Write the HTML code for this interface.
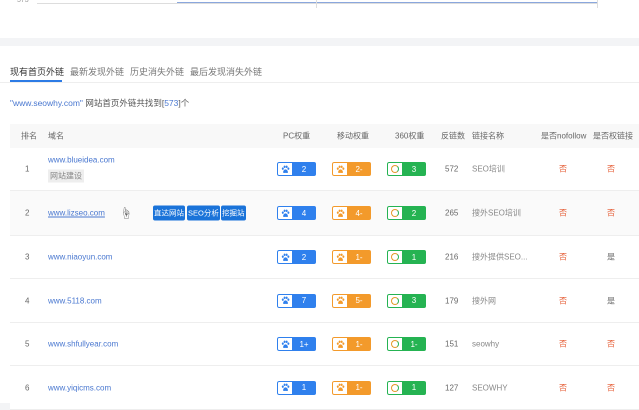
<!DOCTYPE html><html><head><meta charset="utf-8"><style>
body{margin:0;width:639px;height:403px;overflow:hidden;background:#f3f4f6;font-family:"Liberation Sans","Noto Sans CJK SC",sans-serif;position:relative;font-size:8px;color:#666}
.a{position:absolute}
.card{position:absolute;background:#fff;left:0;right:0}
.b{position:absolute;height:14px;width:39px;border-radius:2px;overflow:hidden;display:flex}
.b .l{width:15px;background:#fff;box-sizing:border-box;border-radius:2px 0 0 2px;display:flex;align-items:center;justify-content:center;font-size:8px}
.b .r{flex:1;color:#fff;display:flex;align-items:center;justify-content:center;font-size:8px}
.row{position:absolute;left:10px;right:0;border-bottom:1px solid #eee}
.c{position:absolute;top:50%;transform:translateY(-50%);white-space:nowrap}
.lnk{color:#4a78d0}
.red{color:#e4572e}
</style></head><body>
<div class="card" style="top:0;height:38px">
<div class="a" style="left:17px;top:-3px;font-size:7px;color:#999">573</div>
<div class="a" style="left:37px;top:3px;width:560px;height:1px;background:#ddd"></div>
<div class="a" style="left:177px;top:2px;width:420px;height:1px;background:#8aa7dd"></div>
<div class="a" style="left:316px;top:0;width:1px;height:8px;background:#ddd"></div>
<div class="a" style="left:597px;top:0;width:1px;height:8px;background:#ddd"></div>
</div>
<div class="card" style="top:46px;height:357px">
<div class="a" style="left:10px;top:19px;font-size:9px;color:#333">现有首页外链</div>
<div class="a" style="left:70px;top:19px;font-size:9px;color:#777">最新发现外链</div>
<div class="a" style="left:130px;top:19px;font-size:9px;color:#777">历史消失外链</div>
<div class="a" style="left:190px;top:19px;font-size:9px;color:#777">最后发现消失外链</div>
<div class="a" style="left:10px;top:34px;width:52px;height:2px;background:#2d7be5"></div>
<div class="a" style="left:0;right:0;top:36px;height:1px;background:#eee"></div>
<div class="a" style="left:10px;top:51px;font-size:8.5px;color:#555"><span class="lnk">"www.seowhy.com"</span> 网站首页外链共找到[<span class="lnk">573</span>]个</div>
</div>
<div class="row" style="top:124px;height:24px;background:#f8f8f8">
<span class="c" style="left:11px">排名</span><span class="c" style="left:38px">域名</span>
<span class="c" style="left:273px">PC权重</span><span class="c" style="left:327px">移动权重</span><span class="c" style="left:385px">360权重</span>
<span class="c" style="left:431px">反链数</span><span class="c" style="left:462px">链接名称</span><span class="c" style="left:531px">是否nofollow</span><span class="c" style="left:583px">是否权链接</span>
</div>
<div id="rows"></div>
<script>
var d=[
[148,43,"1","www.blueidea.com","2","2-","3","572","SEO培训","否","否"],
[191,45,"2","www.lizseo.com","4","4-","2","265","搜外SEO培训","否","否"],
[236,43,"3","www.niaoyun.com","2","1-","1","216","搜外提供SEO...","否","是"],
[279,44,"4","www.5118.com","7","5-","3","179","搜外网","否","是"],
[323,43,"5","www.shfullyear.com","1+","1-","1-","151","seowhy","否","否"],
[366,44,"6","www.yiqicms.com","1","1-","1","127","SEOWHY","否","否"]];
function paw(c){return '<svg width="9" height="9" viewBox="0 0 10 10"><ellipse cx="2" cy="4" rx="1.1" ry="1.4" fill="'+c+'"/><ellipse cx="4" cy="2" rx="1.1" ry="1.4" fill="'+c+'"/><ellipse cx="6.3" cy="2" rx="1.1" ry="1.4" fill="'+c+'"/><ellipse cx="8.2" cy="4" rx="1.1" ry="1.4" fill="'+c+'"/><path d="M5 4.8C3.3 4.8 2.2 7 2.4 8.2 2.7 9.3 4 8.8 5 8.8 6 8.8 7.4 9.3 7.7 8.2 7.9 7 6.7 4.8 5 4.8Z" fill="'+c+'"/></svg>';}
var h="";
d.forEach(function(r,i){
var bg=i==1?"#fafafa":"#fff";
h+='<div class="row" style="top:'+r[0]+'px;height:'+(r[1]-1)+'px;background:'+bg+'">';
h+='<span class="c" style="left:15px">'+r[2]+'</span>';
if(i==0){h+='<span class="c lnk" style="left:38px;top:12px">'+r[3]+'</span><span class="c" style="left:38px;top:28px;background:#eee;padding:1px 2px;color:#888">网站建设</span>';}
else h+='<span class="c lnk" style="left:38px;'+(i==1?'text-decoration:underline':'')+'">'+r[3]+'</span>';
if(i==1){h+='<span class="c" style="left:110px;font-size:12px;color:#555">☝</span>';
[["直达网站",143],["SEO分析",177],["挖掘站",211]].forEach(function(t){h+='<span class="c" style="left:'+t[1]+'px;background:#1a73d9;color:#fff;padding:2px 1px;border-radius:2px;font-size:7.5px">'+t[0]+'</span>';});}
function b(x,col,txt,ic){return '<div class="b" style="left:'+x+'px;top:'+((r[1]-15)/2)+'px"><div class="l" style="border:1px solid '+col+';border-right:0;color:'+col+'">'+ic+'</div><div class="r" style="background:'+col+'">'+txt+'</div></div>';}
h+=b(267,"#2f80ed",r[4],paw("#2f80ed"));
h+=b(322,"#f39a2b",r[5],paw("#f39a2b"));
h+=b(377,"#25b352",r[6],'<span style="display:inline-block;width:6px;height:6px;border:1.5px solid #e59a2b;border-radius:50%;border-right-color:#25b352"></span>');
h+='<span class="c" style="left:435px">'+r[7]+'</span><span class="c" style="left:462px;color:#888">'+r[8]+'</span>';
h+='<span class="c '+(r[9]=="否"?"red":"")+'" style="left:549px">'+r[9]+'</span><span class="c '+(r[10]=="否"?"red":"")+'" style="left:597px">'+r[10]+'</span>';
h+='</div>';});
document.getElementById("rows").innerHTML=h;
</script>
</body></html>
